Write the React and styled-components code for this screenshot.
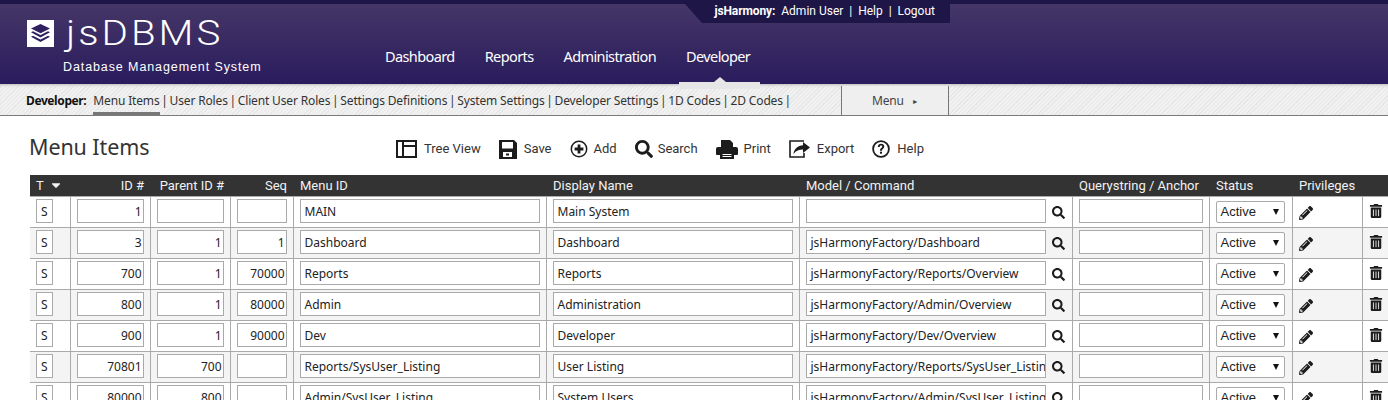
import styled, { createGlobalStyle } from "styled-components"
import { FaSearch, FaPencilAlt, FaTrashAlt, FaCaretDown } from "react-icons/fa"

const GlobalStyle = createGlobalStyle`
html, body {
  margin: 0;
  padding: 0;
  background: #fff;
  overflow: hidden;
}
#root {
  height: 400px;
  overflow: hidden;
}
`;

const Header = styled.header`
height: 80px;
border-top: 4px solid #1e1647;
background: linear-gradient(#453667, #2a1c5d);
display: flex;
position: relative;
`;

const Brand = styled.div`
width: 385px;
padding: 13px 0 0 27px;
box-sizing: border-box;
color: #fff;
`;

const BrandRow = styled.div`
display: flex;
align-items: center;
height: 33px;
`;

const BrandName = styled.div`
font: 300 35px/33px Roboto, sans-serif;
letter-spacing: 2.6px;
margin-left: 12px;
transform: scaleX(1.15);
transform-origin: left center;
`;

const Tagline = styled.div`
font: 12.5px/16px "Liberation Sans", sans-serif;
letter-spacing: 0.9px;
margin: 9px 0 0 36px;
`;

const Nav = styled.nav`
display: flex;
gap: 30px;
padding-top: 43px;
`;

const NavItem = styled.a`
font: 14.5px/18px "Noto Sans", sans-serif;
letter-spacing: -0.6px;
color: #fff;
`;

const UserBar = styled.div`
position: absolute;
top: -4px;
left: 702px;
width: 248px;
height: 23px;
padding-right: 15px;
box-sizing: border-box;
background: #1e1647;
color: #fff;
font: 12px/23px Roboto, sans-serif;
text-align: right;
white-space: pre;
b {
  font-weight: 700;
  letter-spacing: -0.1px;
}
&::before {
  content: "";
  position: absolute;
  left: -17px;
  top: 4px;
  border-top: 19px solid #1e1647;
  border-left: 17px solid transparent;
}
`;

const ActiveTab = styled.div`
position: absolute;
left: 679px;
top: 78px;
width: 81px;
height: 7px;
background: #e6e6e6;
&::before {
  content: "";
  position: absolute;
  left: 35px;
  top: -5px;
  border-bottom: 5px solid #e6e6e6;
  border-left: 6px solid transparent;
  border-right: 6px solid transparent;
}
`;

const SubBar = styled.div`
height: 32px;
box-sizing: border-box;
border-bottom: 1px solid #7b7b7b;
background: repeating-linear-gradient(135deg, #f1f1f1 0 2px, #e7e7e7 2px 3px);
box-shadow: inset 0 3px 3px -2px #bbb;
display: flex;
font: 12px/33px "Noto Sans", sans-serif;
letter-spacing: -0.15px;
color: #333;
`;

const SubLabel = styled.b`
margin-left: 26px;
color: #111;
letter-spacing: -0.4px;
margin-right: 7px;
`;

const SubLinks = styled.div`
width: 748px;
white-space: pre;
overflow: hidden;
`;

const SubLink = styled.span`
display: inline-block;
height: 31px;
box-sizing: border-box;
${props => props.$active && "border-bottom: 3px solid #777;"}
`;

const Separator = styled.span`
display: inline-block;
width: 10px;
text-align: center;
`;

const MenuButton = styled.div`
width: 108px;
box-sizing: border-box;
border-left: 1px solid #777;
border-right: 1px solid #777;
background: #efefef;
text-align: center;
color: #444;
margin-top: 2px;
line-height: 29px;
`;

const Arrow = styled.span`
font-size: 7px;
margin-left: 8px;
vertical-align: 1px;
`;

const TitleRow = styled.div`
display: flex;
align-items: center;
height: 59px;
padding-left: 29px;
`;

const Title = styled.h1`
width: 367px;
margin: 2px 0 0;
font: 400 21.5px/30px "Noto Sans", sans-serif;
letter-spacing: -0.1px;
color: #333;
`;

const Toolbar = styled.div`
display: flex;
align-items: center;
gap: 18px;
margin-top: 7px;
`;

const Tool = styled.a`
display: flex;
align-items: center;
gap: ${props => props.$gap || 7}px;
font: 13px/16px Roboto, sans-serif;
color: #333;
svg {
  color: #1c1c1c;
  flex: none;
}
`;

const Grid = styled.table`
margin-left: 30px;
width: 1358px;
table-layout: fixed;
border-collapse: collapse;
font: 12px/16px "Noto Sans", sans-serif;
color: #222;
`;

const HeadCell = styled.th`
height: 21px;
padding: 0 6px 0 7px;
background: #333;
color: #f2f2f2;
font: 400 13px/21px Roboto, sans-serif;
text-align: ${props => props.$align || "left"};
white-space: nowrap;
overflow: visible;
&:first-child {
  padding-left: 6px;
}
svg {
  vertical-align: -2px;
  margin-left: 5px;
}
`;

const Row = styled.tr`
height: 31px;
background: ${props => props.$even ? "#f4f4f4" : "#fff"};
`;

const Cell = styled.td`
border: 1px solid #aaa;
padding: 0 6px;
white-space: nowrap;
&:first-child {
  border-left: none;
}
&:last-child {
  border-right: none;
}
svg {
  color: #1c1c1c;
  vertical-align: middle;
}
`;

const LookupCell = styled(Cell)`
padding-right: 0;
svg {
  margin-left: 6px;
}
`;

const PrivilegeCell = styled(Cell)`
svg {
  margin-top: 2px;
}
`;

const DeleteCell = styled(Cell)`
svg {
  margin-bottom: 2px;
}
`;

const Field = styled.div`
display: inline-block;
vertical-align: middle;
box-sizing: border-box;
width: ${props => props.$w}px;
height: 24px;
margin-bottom: 2px;
border: 1px solid #aaa;
background: #fff;
padding: 0 ${props => props.$right ? 1 : 4}px;
font: 12px/23px "Noto Sans", sans-serif;
text-align: ${props => props.$right ? "right" : "left"};
white-space: nowrap;
overflow: hidden;
`;

const SelectBox = styled.div`
display: flex;
justify-content: space-between;
align-items: center;
box-sizing: border-box;
width: 69px;
height: 22px;
padding: 0 4px;
border: 1px solid #aaa;
border-radius: 2px;
background: #fff;
font: 13px/20px "Liberation Sans", sans-serif;
color: #222;
`;

const SelectArrow = styled.span`
margin-right: 1px;
border-top: 6px solid #111;
border-left: 3px solid transparent;
border-right: 3px solid transparent;
`;

const LogoMark = () => (
  <svg width="27" height="27" viewBox="0 0 27 27">
    <rect width="27" height="27" fill="#fff" />
    <path d="M13.5 4 23 8.6 13.5 13.2 4 8.6Z" fill="#2f2160" />
    <path d="M4 12.2 6 11.2 13.5 15 21 11.2 23 12.2 13.5 17.4Z" fill="#2f2160" />
    <path d="M4 16.8 6 15.8 13.5 19.6 21 15.800 23 16.8 13.5 22Z" fill="#2f2160" />
  </svg>
)

const TreeIcon = () => (
  <svg width="21" height="18" viewBox="0 0 21 18" fill="none" stroke="#1c1c1c" strokeWidth="2">
    <rect x="1" y="1" width="19" height="16" />
    <path d="M7 1V17M7 6H20" />
  </svg>
)

const SaveIcon = () => (
  <svg width="18" height="19" viewBox="0 0 18 19">
    <path fillRule="evenodd" d="M0 0H15L18 3V19H0ZM3 2V8.500H14V2ZM4 12V17H13V12Z" fill="#1c1c1c" />
    <rect x="7" y="13.500" width="3" height="2" fill="#1c1c1c" />
  </svg>
)

const AddIcon = () => (
  <svg width="18" height="18" viewBox="0 0 18 18">
    <circle cx="9" cy="9" r="7.7" fill="none" stroke="#1c1c1c" strokeWidth="1.5" />
    <path d="M7.6 4.6h2.8v3h3v2.8h-3v3H7.6v-3h-3V7.6h3Z" fill="#1c1c1c" />
  </svg>
)

const PrintIcon = () => (
  <svg width="22" height="19" viewBox="0 0 22 19">
    <path d="M5 0H14L17 3V7H5Z" fill="#1c1c1c" />
    <path fillRule="evenodd" d="M2 7H20Q22 7 22 9V14Q22 15 21 15H18V12H4V15H1Q0 15 0 14V9Q0 7 2 7Z" fill="#1c1c1c" />
    <path fillRule="evenodd" d="M4 12H18V19H4ZM6.500 14V15H15.500V14ZM6.500 16V17H15.500V16Z" fill="#1c1c1c" />
  </svg>
)

const ExportIcon = () => (
  <svg width="21" height="18" viewBox="0 0 21 18">
    <path d="M15 1H1v16h14v-4" fill="none" stroke="#1c1c1c" strokeWidth="1.6" />
    <path d="M14 2l7 5.5-7 5.5V9.5C10 9.5 7 10.500 4.500 14 5 8.500 9 5.500 14 5.200Z" fill="#1c1c1c" />
  </svg>
)

const HelpIcon = () => (
  <svg width="18" height="18" viewBox="0 0 18 18">
    <circle cx="9" cy="9" r="7.900" fill="none" stroke="#1c1c1c" strokeWidth="1.800" />
    <path d="M5.800 7c0-2.100 1.500-3.200 3.300-3.200 1.900 0 3.200 1.100 3.200 2.800 0 2.300-2.300 2.300-2.300 4.100H8c0-2.800 2.200-2.800 2.200-4 0-.7-.5-1.100-1.100-1.100-.8 0-1.300.5-1.400 1.400Z" fill="#1c1c1c" />
    <rect x="8" y="11.700" width="2" height="2" fill="#1c1c1c" />
  </svg>
)

const rows = [
  ["1", "", "", "MAIN", "Main System", ""],
  ["3", "1", "1", "Dashboard", "Dashboard", "jsHarmonyFactory/Dashboard"],
  ["700", "1", "70000", "Reports", "Reports", "jsHarmonyFactory/Reports/Overview"],
  ["800", "1", "80000", "Admin", "Administration", "jsHarmonyFactory/Admin/Overview"],
  ["900", "1", "90000", "Dev", "Developer", "jsHarmonyFactory/Dev/Overview"],
  ["70801", "700", "", "Reports/SysUser_Listing", "User Listing", "jsHarmonyFactory/Reports/SysUser_Listing"],
  ["80000", "800", "", "Admin/SysUser_Listing", "System Users", "jsHarmonyFactory/Admin/SysUser_Listing"],
]

const subLinks = ["Menu Items", "User Roles", "Client User Roles", "Settings Definitions", "System Settings", "Developer Settings", "1D Codes", "2D Codes"]

const App = () => {
  return (
    <>
      <GlobalStyle />
      <Header>
        <Brand>
          <BrandRow>
            <LogoMark />
            <BrandName>jsDBMS</BrandName>
          </BrandRow>
          <Tagline>Database Management System</Tagline>
        </Brand>
        <Nav>
          <NavItem>Dashboard</NavItem>
          <NavItem>Reports</NavItem>
          <NavItem>Administration</NavItem>
          <NavItem>Developer</NavItem>
        </Nav>
        <UserBar><b>jsHarmony:</b>  Admin User  |  Help  |  Logout</UserBar>
        <ActiveTab />
      </Header>
      <SubBar>
        <SubLabel>Developer:</SubLabel>
        <SubLinks>
          {subLinks.map((link, i) => (
            <span key={link}>
              <SubLink $active={i === 0}>{link}</SubLink>
              <Separator>|</Separator>
            </span>
          ))}
        </SubLinks>
        <MenuButton>Menu<Arrow>►</Arrow></MenuButton>
      </SubBar>
      <TitleRow>
        <Title>Menu Items</Title>
        <Toolbar>
          <Tool><TreeIcon />Tree View</Tool>
          <Tool><SaveIcon />Save</Tool>
          <Tool $gap={6}><AddIcon />Add</Tool>
          <Tool $gap={5}><FaSearch size={18} />Search</Tool>
          <Tool $gap={6}><PrintIcon />Print</Tool>
          <Tool><ExportIcon />Export</Tool>
          <Tool><HelpIcon />Help</Tool>
        </Toolbar>
      </TitleRow>
      <Grid>
        <colgroup>
          <col width="40" />
          <col width="80" />
          <col width="80" />
          <col width="63" />
          <col width="253" />
          <col width="253" />
          <col width="273" />
          <col width="137" />
          <col width="83" />
          <col width="70" />
          <col width="26" />
        </colgroup>
        <thead>
          <tr>
            <HeadCell>T<FaCaretDown size={14} /></HeadCell>
            <HeadCell $align="right">ID #</HeadCell>
            <HeadCell $align="right">Parent ID #</HeadCell>
            <HeadCell $align="right">Seq</HeadCell>
            <HeadCell>Menu ID</HeadCell>
            <HeadCell>Display Name</HeadCell>
            <HeadCell>Model / Command</HeadCell>
            <HeadCell>Querystring / Anchor</HeadCell>
            <HeadCell>Status</HeadCell>
            <HeadCell>Privileges</HeadCell>
            <HeadCell />
          </tr>
        </thead>
        <tbody>
          {rows.map((r, i) => (
            <Row key={r[0]} $even={i % 2 === 1}>
              <Cell><Field $w={17}>S</Field></Cell>
              <Cell><Field $w={67} $right>{r[0]}</Field></Cell>
              <Cell><Field $w={67} $right>{r[1]}</Field></Cell>
              <Cell><Field $w={50} $right>{r[2]}</Field></Cell>
              <Cell><Field $w={240}>{r[3]}</Field></Cell>
              <Cell><Field $w={240}>{r[4]}</Field></Cell>
              <LookupCell>
                <Field $w={240}>{r[5]}</Field>
                <FaSearch size={13} />
              </LookupCell>
              <Cell><Field $w={124} /></Cell>
              <Cell><SelectBox>Active<SelectArrow /></SelectBox></Cell>
              <PrivilegeCell><FaPencilAlt size={14} /></PrivilegeCell>
              <DeleteCell><FaTrashAlt size={14} /></DeleteCell>
            </Row>
          ))}
        </tbody>
      </Grid>
    </>
  )
}

export default App
